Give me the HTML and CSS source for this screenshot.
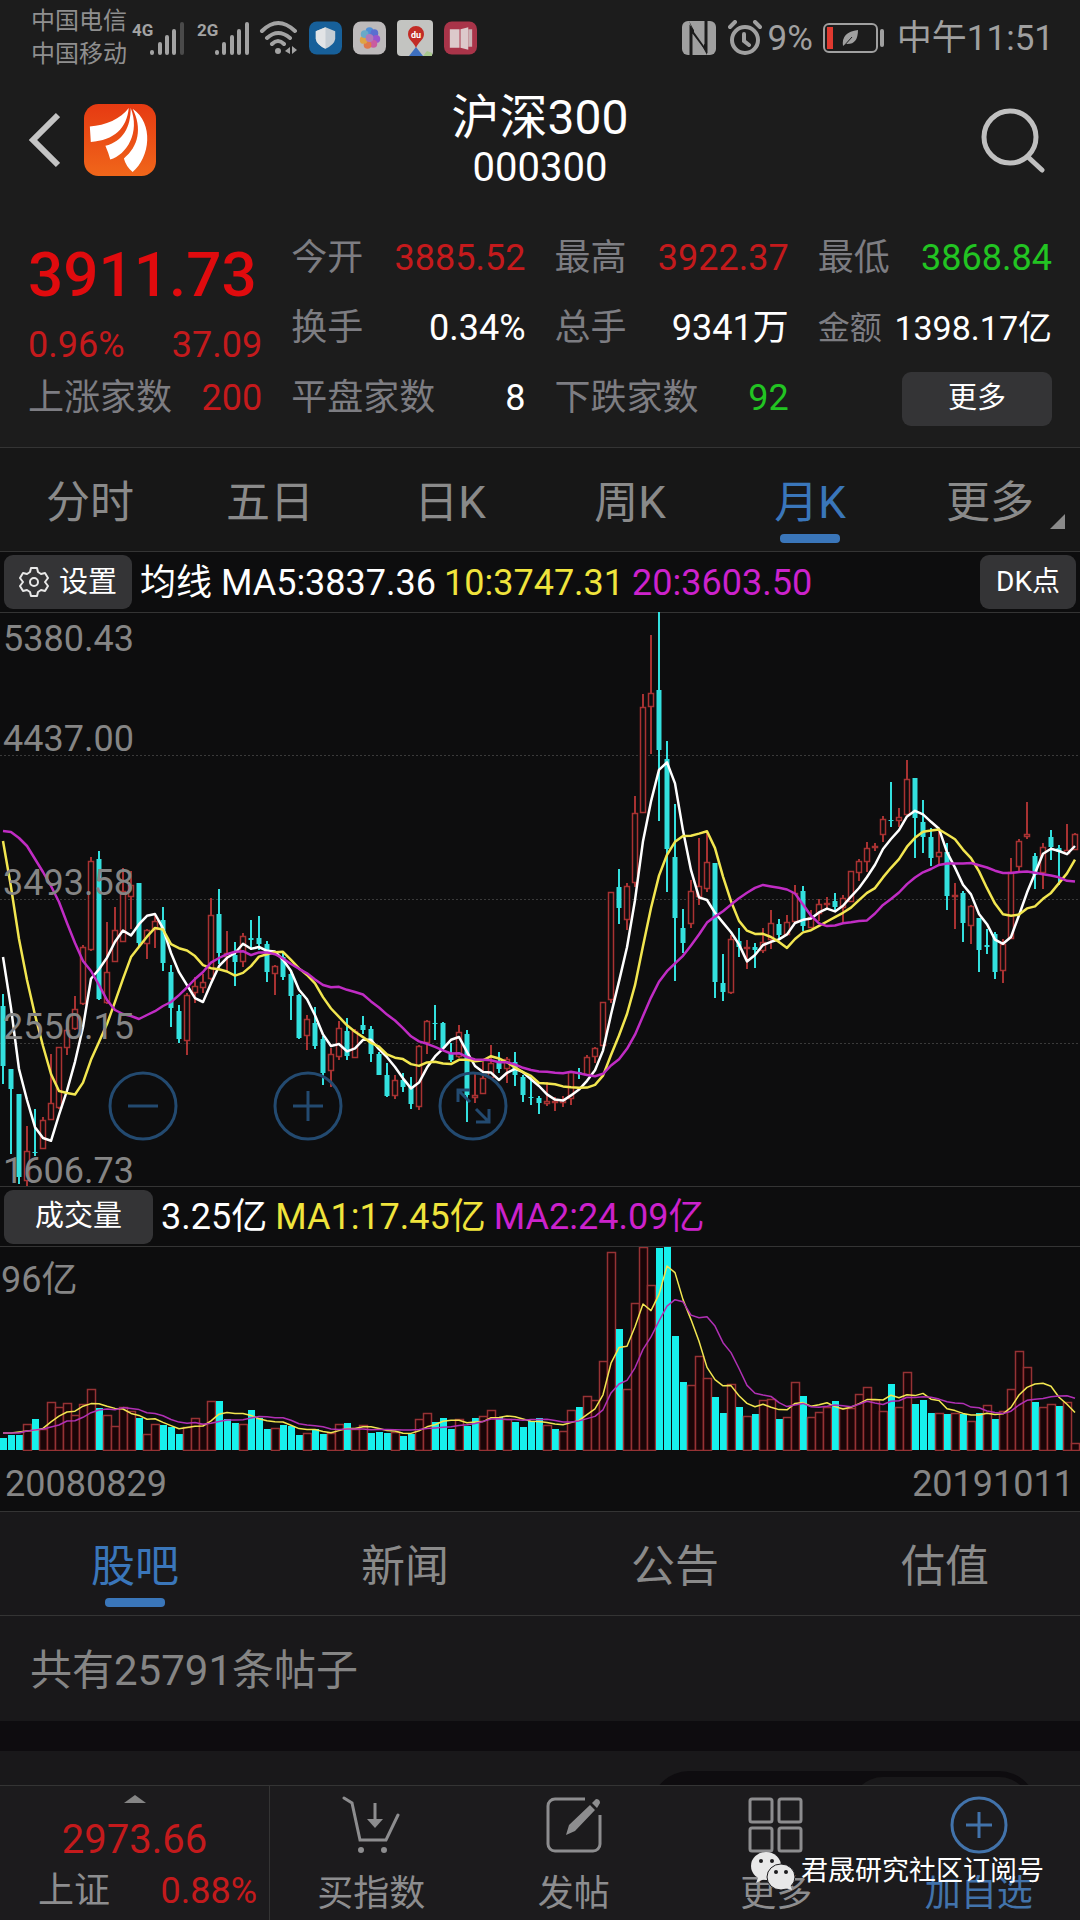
FILE: index.html
```
<!DOCTYPE html>
<html lang="zh-CN">
<head>
<meta charset="utf-8">
<meta name="viewport" content="width=device-width, initial-scale=1.0">
<title>沪深300 000300</title>
<link rel="stylesheet" href="styles.css">
</head>
<body>

<div class="statusbar">
  <div class="carriers">
    <div>中国电信</div>
    <div>中国移动</div>
  </div>
  <svg class="signals" width="120" height="36" viewBox="0 0 120 36" fill="#a3a3a3">
    <text x="1" y="16" class="net">4G</text>
    <g stroke="#a3a3a3" stroke-width="4" stroke-linecap="round">
      <path d="M21 32v1M29 24v9M36 17v16M43 11v22"/>
      <path d="M51 4v29" stroke="#4a4a4a"/>
      <path d="M86 32v1M93 24v9M101 17v16M108 11v22M116 4v29"/>
    </g>
    <text x="66" y="16" class="net">2G</text>
  </svg>
  <svg class="wifi" width="40" height="36" viewBox="0 0 40 36" fill="none" stroke="#a3a3a3" stroke-width="4" stroke-linecap="round">
    <path d="M3 11Q19-5 36 11M8 18Q19 8 31 18M13 24Q19 18 25 24"/>
    <circle cx="19" cy="31" r="3" fill="#a3a3a3" stroke="none"/>
    <path d="M26 31l5-4v7zM33 26v8l5-4z" fill="#a3a3a3" stroke="none"/>
  </svg>
  <svg class="app" width="33" height="34" viewBox="0 0 34 34">
    <rect width="34" height="34" rx="8" fill="#17609a"/>
    <path d="M17 6l10 4v8q-1 6-10 10q-9-4-10-10v-8z" fill="#c5cdd4"/>
    <path d="M17 6v22q-9-4-10-10v-8z" fill="#e2e4e6"/>
  </svg>
  <svg class="app" width="33" height="34" viewBox="0 0 34 34">
    <rect width="34" height="34" rx="8" fill="#bdbabb"/>
    <circle cx="17" cy="10" r="4" fill="#4f8fd8"/>
    <circle cx="22" cy="12" r="4" fill="#5a6fd0"/>
    <circle cx="24" cy="18" r="4" fill="#9a55cc"/>
    <circle cx="21" cy="23" r="4" fill="#c95ca0"/>
    <circle cx="15" cy="24" r="4" fill="#e0784a"/>
    <circle cx="11" cy="19" r="4" fill="#dfa344"/>
    <circle cx="12" cy="13" r="4" fill="#6aa9c8"/>
    <circle cx="17" cy="17" r="4" fill="#b07ab8"/>
  </svg>
  <svg class="app map" width="36" height="36" viewBox="0 0 36 36">
    <rect width="36" height="36" rx="4" fill="#c3c4c1"/>
    <path d="M12 36l7-9 7 9z" fill="#3d6fc0"/>
    <path d="M26 36l4-5 5 2v3z" fill="#a9c98e"/>
    <path d="M19 28c-2-6-8-8-8-14a8 8 0 0 1 16 0c0 6-6 8-8 14z" fill="#c22b25"/>
    <text x="14" y="18" class="du">du</text>
  </svg>
  <svg class="app" width="33" height="34" viewBox="0 0 34 34">
    <rect width="34" height="34" rx="8" fill="#a93449"/>
    <path d="M6 8h10v19H6zM17 8l8-2v23l-8-2z" fill="#dcc9cb"/>
    <path d="M25 8h4v18h-4z" fill="#cbb3b6"/>
  </svg>
  <div class="status-right">
    <svg width="34" height="34" viewBox="0 0 34 34">
      <rect width="34" height="34" rx="6" fill="#a0a0a0"/>
      <path d="M9 34V8l15 20V0" fill="none" stroke="#1c1c1c" stroke-width="3"/>
      <path d="M7 0l3 8 15 20v6z" fill="#1c1c1c"/>
      <path d="M12 5l10 14v6L12 11z" fill="#a0a0a0"/>
    </svg>
    <svg class="alarm" width="34" height="36" viewBox="0 0 34 36" fill="none" stroke="#a0a0a0" stroke-width="4" stroke-linecap="round">
      <circle cx="17" cy="20" r="13"/>
      <path d="M2 7l5-5M32 7l-5-5M16 14v7l5 4"/>
    </svg>
    <span>9%</span>
    <svg class="battery" width="62" height="30" viewBox="0 0 62 30">
      <rect x="1" y="1" width="53" height="28" rx="5" fill="none" stroke="#a0a0a0" stroke-width="2"/>
      <rect x="4" y="4" width="6" height="22" fill="#e03a30"/>
      <rect x="57" y="6" width="4" height="18" rx="2" fill="#a0a0a0"/>
      <path d="M20 23q-2-14 15-16q0 15-12 14z" fill="#a0a0a0"/>
      <path d="M20 24l9-10" stroke="#1c1c1c"/>
    </svg>
    <span>中午11:51</span>
  </div>
</div>

<header class="header">
  <button class="back" type="button" aria-label="返回">
    <svg width="32" height="56" viewBox="0 0 32 56"><path d="M30 3L5 28l25 25" fill="none" stroke="#c4c4c4" stroke-width="6"/></svg>
  </button>
  <svg class="logo" width="72" height="72" viewBox="0 0 74 74">
    <defs><linearGradient id="lg" x1="0" y1="0" x2="0" y2="1"><stop offset="0" stop-color="#e63a12"/><stop offset="1" stop-color="#f0661a"/></linearGradient></defs>
    <rect width="74" height="74" rx="15" fill="url(#lg)"/>
    <path d="M6 23C22 22 38 15 46 4C44 25 31 37 7 39z" fill="#fff"/>
    <path d="M48 4C58 29 44 52 27 57Q25 50 22 43C40 38 48 24 48 4z" fill="#fff"/>
    <path d="M50 5C72 20 68 55 50 70Q43 64 41 56C56 44 60 25 50 5z" fill="#fff"/>
  </svg>
  <div class="title">
    <h1>沪深300</h1>
    <div class="code">000300</div>
  </div>
  <button class="search" type="button" aria-label="搜索">
    <svg width="64" height="66" viewBox="0 0 64 66" fill="none" stroke="#c0c0c0" stroke-width="5"><circle cx="29" cy="30" r="26"/><path d="M47 50l14 13" stroke-linecap="round"/></svg>
  </button>
</header>

<section class="quote">
  <div class="price">
    <div class="last">3911.73</div>
    <div class="item up"><span>0.96%</span><span>37.09</span></div>
  </div>
  <div class="item"><span>今开</span><b class="up">3885.52</b></div>
  <div class="item"><span>最高</span><b class="up">3922.37</b></div>
  <div class="item"><span>最低</span><b class="down">3868.84</b></div>
  <div class="item"><span>换手</span><b>0.34%</b></div>
  <div class="item"><span>总手</span><b>9341万</b></div>
  <div class="item tight"><span>金额</span><b>1398.17亿</b></div>
  <div class="item"><span>上涨家数</span><b class="up">200</b></div>
  <div class="item"><span>平盘家数</span><b>8</b></div>
  <div class="item"><span>下跌家数</span><b class="down">92</b></div>
  <div class="item end"><button class="btn more" type="button">更多</button></div>
</section>

<nav class="tabs">
  <a href="#">分时</a>
  <a href="#">五日</a>
  <a href="#">日K</a>
  <a href="#">周K</a>
  <a href="#" class="active">月K</a>
  <a href="#" class="dropdown">更多</a>
</nav>

<div class="legend">
  <button class="btn set" type="button">
    <svg width="30" height="32" viewBox="0 0 30 32" fill="none" stroke="#e8e8e8" stroke-width="2" stroke-linejoin="round">
      <path d="M12 2h6l1 4 3 2 4-1 3 5-3 4 3 4-3 5-4-1-3 2-1 4h-6l-1-4-3-2-4 1-3-5 3-4-3-4 3-5 4 1 3-2z"/>
      <circle cx="15" cy="16" r="4"/>
    </svg>设置</button>
  <span>均线 MA5:3837.36</span>
  <span class="yellow">10:3747.31</span>
  <span class="magenta">20:3603.50</span>
  <button class="btn dk" type="button">DK点</button>
</div>

<div class="kline">
  <svg id="kline" viewBox="0 613 1080 573">
    <g class="grid"><path d="M0 755.5H1080M0 899.5H1080M0 1043.5H1080"/></g>
    <g id="candles"></g>
    <g id="averages"></g>
    <g class="axis">
      <text x="3" y="651">5380.43</text>
      <text x="3" y="751">4437.00</text>
      <text x="3" y="895">3493.58</text>
      <text x="3" y="1039">2550.15</text>
      <text x="3" y="1183">1606.73</text>
    </g>
  </svg>
  <div class="zoom">
    <button type="button" aria-label="缩小"><svg width="70" height="70" viewBox="0 0 70 70"><circle cx="35" cy="35" r="33"/><path d="M20 35h30"/></svg></button>
    <button type="button" aria-label="放大"><svg width="70" height="70" viewBox="0 0 70 70"><circle cx="35" cy="35" r="33"/><path d="M20 35h30M35 20v30"/></svg></button>
    <button type="button" aria-label="全屏"><svg width="70" height="70" viewBox="0 0 70 70"><circle cx="35" cy="35" r="33"/><path d="M20 31V19h12M20 19l12 12M38 51h13V38M51 51L38 38"/></svg></button>
  </div>
</div>

<div class="legend vol-legend">
  <button class="btn vol" type="button">成交量</button>
  <span>3.25亿</span>
  <span class="yellow">MA1:17.45亿</span>
  <span class="magenta">MA2:24.09亿</span>
</div>

<div class="volume">
  <svg id="volume" viewBox="0 1247 1080 204">
    <g id="bars"></g>
    <g id="volAverages"></g>
    <g class="axis"><text x="1" y="1292">96亿</text></g>
  </svg>
  <div class="dates"><span>20080829</span><span>20191011</span></div>
</div>

<nav class="tabs news">
  <a href="#" class="active">股吧</a>
  <a href="#">新闻</a>
  <a href="#">公告</a>
  <a href="#">估值</a>
</nav>

<div class="posts">共有25791条帖子</div>
<div class="card"><div class="switch"><div class="knob"></div></div></div>

<footer class="bottombar">
  <a href="#" class="index">
    <svg width="22" height="8" viewBox="0 0 22 8"><path d="M0 8L11 0l11 8z" fill="#858585"/></svg>
    <div class="index-value">2973.66</div>
    <div class="index-row"><span>上证</span><span class="up">0.88%</span></div>
  </a>
  <a href="#" class="tool">
    <svg width="58" height="58" viewBox="0 0 58 58" fill="none" stroke="#8d8d8f" stroke-width="3">
      <path d="M2 2l8 5 8 37h26l12-25" stroke-linecap="round"/>
      <path d="M33 7v17"/>
      <path d="M25 23h16l-8 9z" fill="#8d8d8f" stroke="none"/>
      <circle cx="19" cy="54" r="3" fill="#8d8d8f" stroke="none"/>
      <circle cx="42" cy="54" r="3" fill="#8d8d8f" stroke="none"/>
    </svg>买指数</a>
  <a href="#" class="tool">
    <svg width="58" height="58" viewBox="0 0 58 58" fill="none" stroke="#8d8d8f" stroke-width="3">
      <path d="M40 3H10a7 7 0 0 0-7 7v38a7 7 0 0 0 7 7h38a7 7 0 0 0 7-7V19"/>
      <path d="M21 39l3-10 21-20 5 5-20 21zM47 7l4-4q4 0 4 4l-3 5z" fill="#8d8d8f" stroke="none"/>
    </svg>发帖</a>
  <a href="#" class="tool">
    <svg width="58" height="58" viewBox="0 0 58 58" fill="none" stroke="#8d8d8f" stroke-width="3">
      <rect x="3" y="3" width="22" height="23" rx="2"/>
      <rect x="32" y="3" width="22" height="23" rx="2"/>
      <rect x="3" y="32" width="22" height="23" rx="2"/>
      <rect x="32" y="32" width="22" height="23" rx="2"/>
    </svg>更多</a>
  <a href="#" class="tool add">
    <svg width="58" height="58" viewBox="0 0 58 58" fill="none" stroke="#4273ab" stroke-width="3">
      <circle cx="29" cy="29" r="27"/>
      <path d="M16 29h26M29 16v26"/>
    </svg>加自选</a>
  <div class="watermark">
    <svg width="44" height="38" viewBox="0 0 44 38">
      <path d="M8 24l-3 7 8-4z" fill="#e8e8e8"/>
      <ellipse cx="15" cy="14" rx="15" ry="14" fill="#e8e8e8"/>
      <ellipse cx="30" cy="25" rx="14" ry="13" fill="#e8e8e8" stroke="#1c1b1d"/>
      <path d="M34 36l7 2-2-6z" fill="#e8e8e8"/>
      <g fill="#1c1b1d"><circle cx="10" cy="9" r="2"/><circle cx="21" cy="9" r="2"/><circle cx="25" cy="20" r="2"/><circle cx="35" cy="20" r="2"/></g>
    </svg>君晟研究社区订阅号</div>
</footer>

<script src="chart.js"></script>
</body>
</html>
```

FILE: styles.css
```
* {
  box-sizing: border-box;
}

body {
  margin: 0;
  background: #1c1c1c;
  color: #fff;
  font-family: Roboto, "Noto Sans CJK SC", sans-serif;
  font-size: 36px;
  line-height: 1.2;
}

svg {
  display: block;
  flex: none;
}

a {
  color: inherit;
  text-decoration: none;
}

button {
  font-family: inherit;
  line-height: inherit;
  color: inherit;
  background: none;
  border: none;
  padding: 0;
  cursor: pointer;
}

.up {
  color: #c41a1c;
}

.down {
  color: #22c422;
}

.yellow {
  color: #f0e43c;
}

.magenta {
  color: #cc22cc;
}

/* status bar */
.statusbar {
  display: flex;
  align-items: center;
  height: 74px;
  padding: 1px 26px 0 31px;
  color: #a0a0a0;
}

.carriers {
  font-size: 24px;
  line-height: 33px;
  color: #8f8f8f;
  margin-right: 4px;
}

.net {
  font-size: 17px;
  font-weight: bold;
}

.du {
  font-size: 9px;
  font-weight: bold;
  fill: #fff;
}

.wifi {
  margin: 0 10px 0 8px;
}

.app {
  margin-right: 11px;
}

.status-right {
  display: flex;
  align-items: center;
  margin-left: auto;
  font-size: 35px;
}

.status-right span {
  padding-top: 2px;
}

.alarm {
  margin: 0 6px 0 12px;
}

.battery {
  margin: 0 12px 0 10px;
}

/* title */
.header {
  display: flex;
  align-items: center;
  height: 148px;
  padding: 0 35px 16px 28px;
}

.back {
  margin-right: 24px;
}

.title {
  flex: 1;
  text-align: center;
  padding: 1px 57px 0 0;
}

.title h1 {
  margin: 0;
  font-size: 48px;
  font-weight: normal;
  line-height: 54px;
}

.code {
  font-size: 40px;
  line-height: 46px;
}

/* quote */
.quote {
  display: grid;
  grid-template-columns: repeat(4, 1fr);
  grid-auto-rows: 70px;
  column-gap: 29px;
  padding: 0 28px 15px;
  border-bottom: 1px solid #343434;
}

.price {
  grid-row: span 2;
}

.last {
  font-size: 62px;
  font-weight: 500;
  line-height: 106px;
  color: #e00b0e;
}

.price .item {
  padding: 0;
  line-height: 34px;
}

.item {
  display: flex;
  align-items: center;
  justify-content: space-between;
  padding-top: 3px;
  white-space: nowrap;
  color: #7d7d82;
}

.item b {
  font-weight: normal;
  color: #fff;
}

.item.up, .item b.up {
  color: #c41a1c;
}

.item b.down {
  color: #22c422;
}

.tight span {
  font-size: 32px;
}

.tight b {
  font-size: 34px;
}

.end {
  justify-content: flex-end;
}

.btn {
  display: flex;
  align-items: center;
  justify-content: center;
  height: 54px;
  font-size: 29px;
  color: #fff;
  background: #343436;
  border-radius: 9px;
}

.more {
  width: 150px;
}

/* tabs */
.tabs {
  display: flex;
  height: 104px;
  background: #171717;
  border-bottom: 1px solid #343434;
  font-size: 44px;
  color: #8a8a8a;
}

.tabs a {
  flex: 1;
  position: relative;
  text-align: center;
  line-height: 110px;
}

.tabs .active {
  color: #3a76ba;
}

.tabs .active:after {
  content: "";
  position: absolute;
  left: 50%;
  bottom: 8px;
  width: 60px;
  height: 9px;
  margin-left: -30px;
  border-radius: 4px;
  background: #3a76ba;
}

.tabs .dropdown:after {
  content: "";
  position: absolute;
  right: 15px;
  bottom: 22px;
  border-left: 15px solid transparent;
  border-bottom: 15px solid #8a8a8a;
}

.news {
  background: #19181a;
}

/* charts */
.legend {
  display: flex;
  align-items: center;
  gap: 8px;
  height: 61px;
  padding: 0 4px;
  background: #0d0d0e;
  border-bottom: 1px solid #343434;
  white-space: nowrap;
}

.legend span {
  padding-top: 3px;
}

.set {
  width: 128px;
  gap: 10px;
}

.dk {
  width: 96px;
  margin-left: auto;
  font-size: 28px;
}

.vol {
  width: 149px;
}

.kline {
  position: relative;
  background: #0d0d0e;
}

.kline > svg, .volume > svg {
  width: 100%;
  height: auto;
}

.kline > svg {
  overflow: visible;
}

.vol-legend {
  border-top: 1px solid #343434;
}

.grid path {
  stroke: #3a3a3a;
  stroke-dasharray: 2 2;
}

.axis {
  fill: #858585;
}

.ma {
  fill: none;
  stroke-width: 2.5;
  stroke-linejoin: round;
}

.ma.thin {
  stroke-width: 1.5;
}

.zoom {
  position: absolute;
  left: 108px;
  bottom: 45px;
  display: flex;
  gap: 95px;
}

.zoom svg {
  fill: none;
  stroke: #234a70;
  stroke-width: 3;
}

.volume {
  background: #0d0d0e;
  border-bottom: 1px solid #343434;
}

.dates {
  display: flex;
  justify-content: space-between;
  height: 60px;
  padding: 3px 6px 0 5px;
  line-height: 60px;
  color: #858585;
}

/* posts */
.posts {
  height: 105px;
  padding-left: 30px;
  background: #19181a;
  font-size: 42px;
  line-height: 109px;
  color: #858585;
}

.card {
  height: 64px;
  overflow: hidden;
  background: #19181a;
  border-top: 30px solid #0e0c0f;
}

.switch {
  width: 386px;
  height: 76px;
  margin: 20px 43px 0 auto;
  padding: 6px;
  border-radius: 38px;
  background: #0e0c0f;
}

.knob {
  width: 180px;
  height: 64px;
  margin-left: auto;
  border-radius: 32px;
  background: #19181a;
}

/* bottom bar */
.bottombar {
  position: relative;
  display: flex;
  height: 135px;
  border-top: 1px solid #343434;
  background: #1c1b1d;
  color: #8d8d8f;
}

.index {
  display: flex;
  flex: none;
  flex-direction: column;
  align-items: center;
  width: 25%;
  padding-top: 9px;
  border-right: 1px solid #343434;
}

.index-value {
  font-size: 40px;
  line-height: 74px;
  color: #c41a1c;
}

.index-row {
  display: flex;
  align-self: stretch;
  justify-content: space-between;
  padding: 0 12px 0 38px;
  line-height: 28px;
}

.tool {
  flex: 1;
  display: flex;
  flex-direction: column;
  align-items: center;
  padding-top: 10px;
  line-height: 80px;
}

.add {
  color: #4273ab;
}

.watermark {
  position: absolute;
  right: 36px;
  bottom: 30px;
  display: flex;
  align-items: center;
  gap: 6px;
  font-size: 27px;
  line-height: 38px;
  color: #fff;
}
```

FILE: chart.js
```
// one row per month: high, body top, body bottom, low, 1 = up / 0 = down
var candles = [
  [994,1006,1066,1084,0],[1069,1069,1089,1154,0],[1094,1094,1177,1184,0],[1126,1151,1181,1186,1],[1109,1152,1153,1156,0],
  [1117,1120,1149,1149,1],[1054,1103,1120,1120,1],[1047,1047,1108,1109,1],[1028,1030,1048,1055,1],[996,1009,1029,1030,1],
  [945,947,1004,1005,1],[857,861,950,951,1],[851,859,999,1000,0],[922,972,1003,1004,1],[907,930,962,962,1],
  [868,891,942,942,1],[871,885,897,929,1],[883,883,943,946,0],[929,930,944,959,1],[915,921,930,948,1],
  [907,920,963,971,0],[965,972,1008,1027,0],[1005,1011,1039,1043,0],[993,995,1041,1055,1],[977,986,993,1003,1],
  [974,982,988,993,1],[898,915,979,980,1],[889,914,953,964,0],[931,953,957,971,1],[942,955,962,986,0],
  [933,936,962,967,1],[920,938,940,950,0],[916,938,944,950,0],[941,944,972,982,0],[965,966,974,995,1],
  [952,957,977,980,0],[972,974,996,1020,0],[994,995,1038,1039,0],[1015,1019,1036,1050,1],[1007,1023,1046,1049,0],
  [1036,1039,1073,1085,0],[1048,1054,1071,1087,1],[1021,1028,1057,1060,1],[1018,1031,1056,1060,0],[1029,1031,1058,1058,1],
  [1016,1025,1030,1034,0],[1026,1029,1054,1062,0],[1052,1054,1075,1075,0],[1063,1075,1096,1097,0],[1075,1080,1096,1099,1],
  [1073,1080,1087,1092,0],[1077,1087,1104,1109,0],[1045,1046,1107,1110,1],[1020,1021,1043,1054,1],[1005,1023,1024,1040,0],
  [1022,1023,1048,1050,0],[1043,1053,1060,1062,0],[1025,1032,1057,1058,1],[1030,1034,1095,1122,0],[1073,1095,1098,1103,1],
  [1062,1078,1094,1094,1],[1045,1063,1078,1078,1],[1052,1063,1069,1073,0],[1057,1059,1069,1083,1],[1052,1062,1075,1086,0],
  [1075,1077,1095,1102,0],[1077,1097,1098,1105,0],[1096,1098,1103,1114,0],[1082,1101,1104,1106,1],[1097,1101,1103,1111,1],
  [1096,1100,1103,1107,1],[1072,1072,1099,1105,1],[1068,1072,1074,1079,0],[1055,1057,1075,1075,1],[1047,1048,1057,1063,1],
  [1002,1002,1046,1046,1],[892,892,1000,1003,1],[869,887,908,924,0],[883,886,920,930,1],[796,813,883,887,1],
  [694,707,813,813,1],[635,693,707,754,1],[612,690,750,821,0],[741,759,849,892,0],[804,857,918,981,0],
  [909,928,943,953,0],[880,891,924,928,1],[838,886,897,905,1],[832,862,889,892,1],[863,863,982,998,0],
  [954,983,992,1001,0],[935,939,993,994,1],[928,941,947,957,0],[940,947,949,969,1],[943,947,950,968,0],
  [928,942,951,953,1],[910,923,940,949,1],[919,924,935,939,0],[915,922,935,935,1],[885,893,922,922,1],
  [886,891,926,931,0],[910,917,928,928,1],[899,904,914,921,1],[897,903,905,908,1],[893,901,907,912,0],
  [895,898,908,923,1],[871,871,902,902,1],[859,861,873,881,1],[842,848,862,872,1],[843,846,848,851,1],
  [816,819,835,842,1],[782,820,821,827,0],[808,817,821,827,1],[760,779,815,815,1],[778,778,818,858,0],
  [800,822,837,853,0],[828,837,858,866,0],[830,852,857,865,1],[843,852,896,910,0],[883,895,897,929,1],
  [891,893,923,942,0],[905,906,926,944,1],[918,918,950,972,0],[929,945,947,954,0],[932,934,972,979,0],
  [939,944,971,983,1],[858,872,939,939,1],[839,841,867,873,1],[802,834,837,839,1],[853,856,875,889,0],
  [843,847,873,889,1],[830,837,847,860,0],[845,848,852,885,0],[824,850,854,855,1],[833,834,850,850,1]
];

// top of each volume bar
var volumes = [
  1438,1435,1435,1424,1419,1429,1402,1407,1403,1415,1404,1389,1408,1415,1426,1407,1411,1418,1434,1424,
  1425,1427,1434,1427,1418,1424,1401,1401,1419,1423,1424,1410,1418,1429,1428,1425,1426,1435,1433,1429,
  1434,1433,1424,1423,1429,1425,1433,1432,1433,1432,1436,1434,1419,1413,1422,1418,1429,1419,1426,1418,
  1416,1410,1417,1419,1422,1427,1421,1418,1425,1429,1431,1410,1407,1396,1400,1361,1252,1329,1389,1303,
  1247,1285,1248,1247,1336,1382,1385,1356,1378,1397,1413,1384,1407,1416,1414,1400,1399,1419,1417,1382,
  1396,1417,1412,1407,1401,1408,1408,1394,1387,1400,1411,1384,1407,1372,1404,1400,1413,1413,1414,1413,
  1414,1421,1413,1405,1419,1411,1389,1351,1367,1402,1407,1404,1406,1402,1443
];

// months whose close went the other way from the candle body
var flipped = [28, 45, 59, 69, 123, 131];

var UP = "#a83232";
var STEP = 8;
var BASE = 1450;

function add(id, name, attrs) {
  var el = document.createElementNS("http://www.w3.org/2000/svg", name);
  for (var k in attrs) {
    el.setAttribute(k, attrs[k]);
  }
  document.getElementById(id).appendChild(el);
}

function x(i) {
  return 3 + i * STEP;
}

// lead holds the values that need months before the first candle
function average(id, values, n, lead, color, cls) {
  var points = [];
  for (var i = 0; i < values.length; i++) {
    var y = lead[i];
    if (i >= n - 1) {
      y = 0;
      for (var j = i - n + 1; j <= i; j++) {
        y += values[j];
      }
      y = y / n;
    }
    points.push(x(i) + "," + y.toFixed(1));
  }
  add(id, "polyline", { points: points.join(" "), stroke: color, "class": cls });
}

candles.forEach(function (c, i) {
  if (c[4]) {
    add("candles", "path", {
      d: "M" + x(i) + " " + c[0] + "V" + c[1] + "M" + x(i) + " " + c[2] + "V" + c[3],
      stroke: UP, "stroke-width": 2
    });
    add("candles", "rect", {
      x: x(i) - 2.5, y: c[1] + 0.5, width: 5, height: Math.max(c[2] - c[1] - 1, 1),
      fill: "#0d0d0e", stroke: UP, "stroke-width": 1.5
    });
  } else {
    add("candles", "path", { d: "M" + x(i) + " " + c[0] + "V" + c[3], stroke: "#33e0de", "stroke-width": 2 });
    add("candles", "rect", { x: x(i) - 2.5, y: c[1], width: 5, height: c[2] - c[1], fill: "#33e0de" });
  }
});

volumes.forEach(function (v, i) {
  var up = candles[i][4];
  if (flipped.indexOf(i) >= 0) {
    up = !up;
  }
  if (up) {
    add("bars", "rect", {
      x: x(i) - 3.5, y: v + 0.5, width: 8, height: BASE - v,
      fill: "#190507", stroke: "#963234", "stroke-width": 1.5
    });
  } else {
    add("bars", "rect", { x: x(i) - 3, y: v, width: 7, height: BASE - v, fill: "#17f0ec" });
  }
});

var closes = candles.map(function (c) {
  return c[4] ? c[1] : c[2];
});

average("averages", closes, 5, [957, 1008, 1069, 1100], "#fff", "ma");
average("averages", closes, 10, [841, 887, 939, 980, 1015, 1046, 1074, 1091, 1093], "#f2e650", "ma");
average("averages", closes, 20, [831, 832, 838, 846, 859, 872, 886, 902, 923, 943, 961, 971, 985, 1000, 1010, 1014, 1016, 1019, 1015], "#c02cc4", "ma");

average("volAverages", volumes, 5, [1433, 1433, 1432, 1431], "#f2e650", "ma thin");
average("volAverages", volumes, 10, [1433, 1433, 1433, 1431, 1430, 1429, 1427, 1425, 1421], "#b030b4", "ma thin");
```
